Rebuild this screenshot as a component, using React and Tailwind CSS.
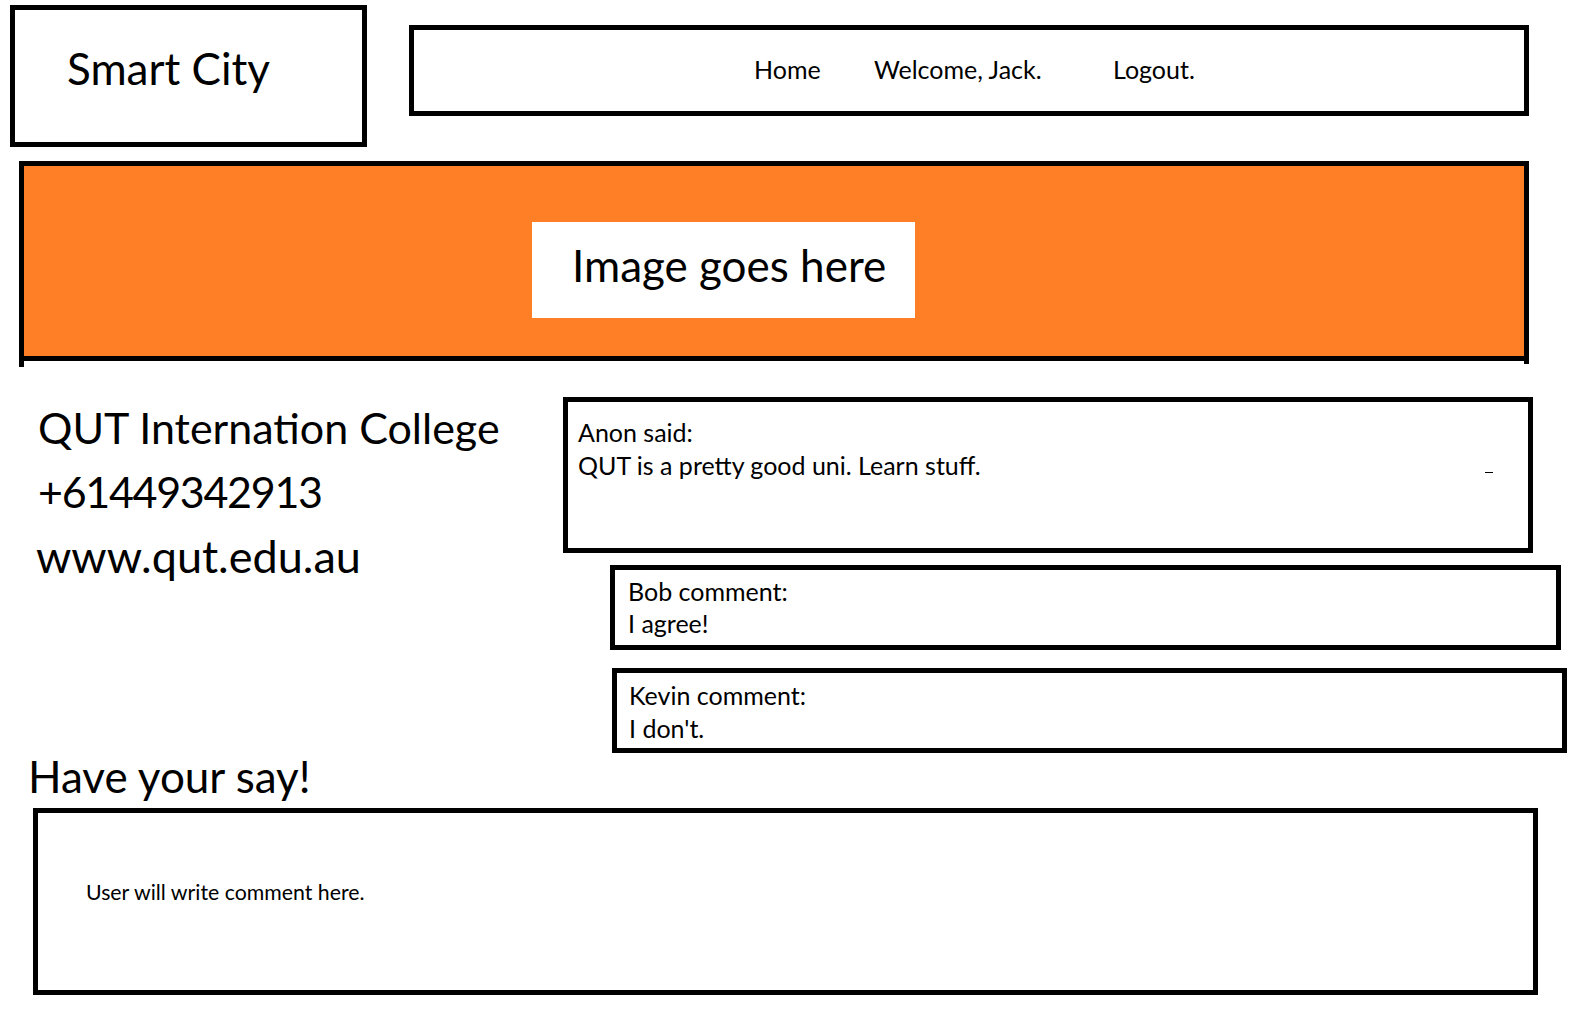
import React from "react";

export default function App() {
  return (
    <div
      className="relative w-[1577px] h-[1017px] bg-white overflow-hidden text-black"
      style={{ fontFamily: "Lato, 'Open Sans', sans-serif" }}
    >
      {/* Header */}
      <div className="flex items-start pl-[10px] pt-[5px]">
        <div className="w-[357px] h-[142px] border-[5px] border-black pl-[52px] pt-[36px]">
          <div className="text-[44px] leading-none">Smart City</div>
        </div>
        <div className="ml-[42px] mt-[20px] w-[1120px] h-[91px] border-[5px] border-black flex pl-[340px] pt-[27px] text-[25px] leading-none">
          <span className="w-[120px]">Home</span>
          <span className="w-[239px]">Welcome, Jack.</span>
          <span>Logout.</span>
        </div>
      </div>

      {/* Banner */}
      <div className="ml-[19px] mt-[14px] w-[1510px]">
        <div className="h-[200px] border-[5px] border-black bg-[#ff7f27] pl-[508px] pt-[56px]">
          <div className="w-[383px] h-[96px] bg-white pl-[40px] pt-[21px]">
            <div className="text-[44px] leading-none whitespace-nowrap">Image goes here</div>
          </div>
        </div>
        <div className="flex justify-between h-[6px]">
          <div className="w-[5px] h-[6px] bg-black" />
          <div className="w-[5px] h-[3px] bg-black" />
        </div>
      </div>

      {/* Content row */}
      <div className="flex mt-[30px]">
        <div className="w-[563px] pl-[38px] pt-[9px] leading-none">
          <div className="text-[43px]">QUT Internation College</div>
          <div className="mt-[21px] text-[43px] tracking-[-1.3px]">+61449342913</div>
          <div className="mt-[21px] -ml-[2px] text-[45px]">www.qut.edu.au</div>
        </div>
        <div className="flex flex-col text-[25px]">
          <div className="relative w-[970px] h-[156px] border-[5px] border-black pl-[10px] pt-[14px] leading-[33px]">
            <div>Anon said:</div>
            <div>QUT is a pretty good uni. Learn stuff.</div>
            <div className="absolute left-[917px] top-[70px] w-[8px] h-[1px] bg-black" />
          </div>
          <div className="mt-[12px] ml-[47px] w-[951px] h-[85px] border-[5px] border-black pl-[13px] pt-[5px] leading-[32px]">
            <div>Bob comment:</div>
            <div>I agree!</div>
          </div>
          <div className="mt-[18px] ml-[49px] w-[955px] h-[85px] border-[5px] border-black pl-[12px] pt-[6px] leading-[33px]">
            <div>Kevin comment:</div>
            <div>I don't.</div>
          </div>
        </div>
      </div>

      {/* Have your say */}
      <div className="ml-[28px] mt-[1px] text-[44px] leading-none">Have your say!</div>
      <div className="ml-[33px] mt-[10px] w-[1505px] h-[187px] border-[5px] border-black pl-[48px] pt-[69px]">
        <div className="text-[21.3px] leading-none">User will write comment here.</div>
      </div>
    </div>
  );
}
